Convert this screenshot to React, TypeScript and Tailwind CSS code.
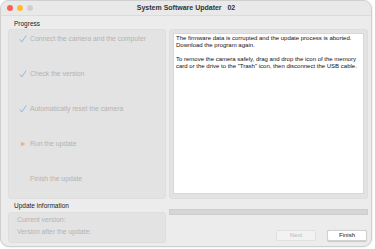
import React from 'react';

const steps: { label: string; state: 'done' | 'current' | 'todo' }[] = [
  { label: 'Connect the camera and the computer', state: 'done' },
  { label: 'Check the version', state: 'done' },
  { label: 'Automatically reset the camera', state: 'done' },
  { label: 'Run the update', state: 'current' },
  { label: 'Finish the update', state: 'todo' },
];

const Check = () => (
  <svg width="8" height="8" viewBox="0 0 8 8" className="shrink-0">
    <path d="M1 4.6 L2.8 7 L7 0.8" fill="none" stroke="#8fb3d3" strokeWidth="0.9" strokeLinecap="round" strokeLinejoin="round" />
  </svg>
);

const Arrow = () => (
  <svg width="8" height="8" viewBox="0 0 8 8" className="shrink-0">
    <path d="M2 1.5 L6.5 4 L2 6.5 Z" fill="#f2b27a" />
  </svg>
);

export default function App() {
  return (
    <div className="w-[375px] h-[249px] bg-white overflow-hidden" style={{ fontFamily: '"Liberation Sans", Arial, sans-serif' }}>
      <div className="w-[372px] h-[247px] rounded-[9px] border border-[#cfcfcf] bg-[#ececec] flex flex-col overflow-hidden shadow-[0_0_2px_rgba(0,0,0,0.15)]">
        {/* title bar */}
        <div className="h-[15px] flex items-center relative border-b border-[#dcdcdc] bg-[#e9e9e9]">
          <div className="flex gap-[4px] pl-[6px]">
            <span className="w-[6px] h-[6px] rounded-full bg-[#fe5f57]" />
            <span className="w-[6px] h-[6px] rounded-full bg-[#febc2e]" />
            <span className="w-[6px] h-[6px] rounded-full bg-[#d0d0d0]" />
          </div>
          <div className="absolute inset-0 flex items-center justify-center text-[7px] font-bold text-[#333]">
            System Software Updater&nbsp;&nbsp;&nbsp;02
          </div>
        </div>

        <div className="flex-1 px-[7px] pt-[3px] grid grid-cols-[158px_199px] gap-x-[3px]">
          {/* left column */}
          <div className="flex flex-col">
            <div className="h-[10px] pl-[6px] text-[6.5px] leading-[10px] text-[#222]">Progress</div>
            <div className="h-[170px] rounded-[3px] bg-[#e3e3e3] border border-[#dedede] flex flex-col pt-[5px] overflow-hidden">
              {steps.map(s => (
                <div key={s.label} className="h-[35px] shrink-0 flex items-start gap-[3px] pl-[10px] text-[6.8px] leading-[8px] text-[#b3b3b3]">
                  <span className="w-[8px] h-[8px] flex">{s.state === 'done' ? <Check /> : s.state === 'current' ? <Arrow /> : null}</span>
                  <span>{s.label}</span>
                </div>
              ))}
            </div>
            <div className="h-[12px] pl-[6px] text-[6.5px] leading-[14px] text-[#222]">Update information</div>
            <div className="h-[31px] mt-[1px] rounded-[3px] bg-[#e3e3e3] border border-[#dedede] flex flex-col pl-[8px] pt-[3px] gap-[5px] text-[6.8px] leading-[7px] text-[#b3b3b3]">
              <span>Current version:</span>
              <span>Version after the update:</span>
            </div>
          </div>

          {/* right column */}
          <div className="flex flex-col">
            <div className="h-[10px]" />
            <div className="h-[170px] rounded-[3px] bg-[#e3e3e3] border border-[#dedede] p-[3px] pb-[4px]">
              <div className="h-full bg-white border border-[#d8d8d8] px-[2px] pt-[1px] text-[6px] leading-[7px] text-[#111]">
                <p>The firmware data is corrupted and the update process is aborted.<br />Download the program again.</p>
                <p className="mt-[7px]">To remove the camera safely, drag and drop the icon of the memory card or the drive to the "Trash" icon, then disconnect the USB cable.</p>
              </div>
            </div>
            <div className="h-[6px] mt-[10px] bg-[#d6d6d6] border border-[#cdcdcd]" />
            <div className="flex justify-end gap-[11px] mt-[15px] pr-[1px]">
              <button className="w-[40px] h-[11px] rounded-[2px] bg-[#f2f2f2] border border-[#e0e0e0] text-[6px] text-[#b8b8b8] leading-[9px]">Next</button>
              <button className="w-[40px] h-[11px] rounded-[2px] bg-white border border-[#d0d0d0] shadow-[0_0.5px_1px_rgba(0,0,0,0.15)] text-[6px] text-[#111] leading-[9px]">Finish</button>
            </div>
          </div>
        </div>
      </div>
    </div>
  );
}
